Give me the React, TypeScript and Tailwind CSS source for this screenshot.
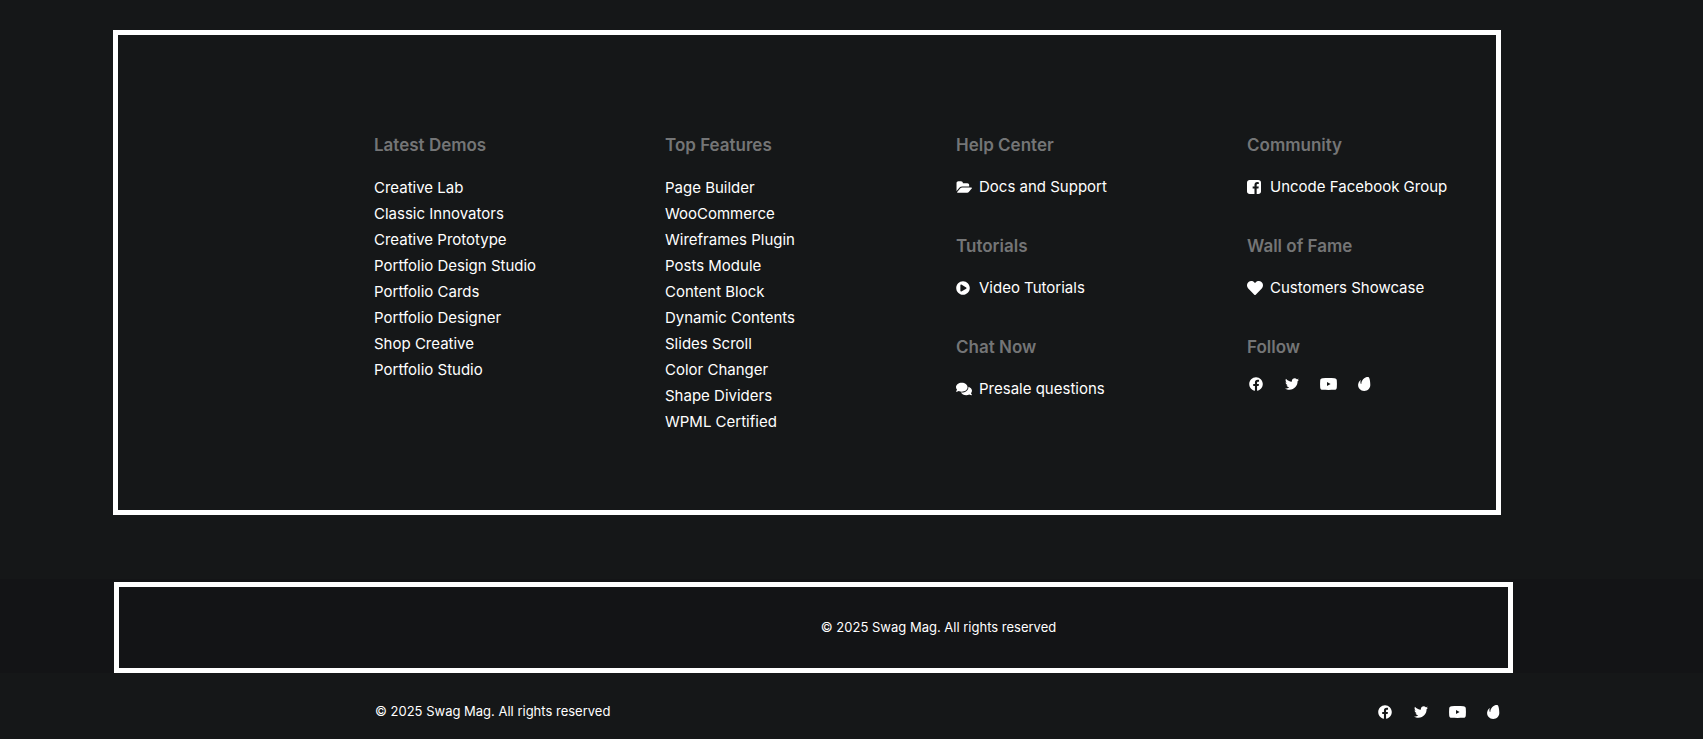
import React from 'react';
import { FaComments, FaFacebook, FaHeart, FaPlayCircle, FaTwitter } from 'react-icons/fa';

interface IconProps {
  className?: string;
}

interface IconBlock {
  title: string;
  label: string;
  icon: React.ComponentType<IconProps>;
  iconClass: string;
}

const FolderOpenIcon: React.FC<IconProps> = ({ className }) => (
  <svg className={className} viewBox="0 128 1943 1408" fill="currentColor">
    <path d="M1943 952q0 31-31 66l-336 396q-43 51-120.5 86.5t-143.5 35.5h-1088q-34 0-60.5-13t-26.5-43q0-31 31-66l336-396q43-51 120.5-86.5t143.5-35.5h1088q34 0 60.5 13t26.5 43zm-343-344v160h-832q-94 0-197 47.5t-164 119.5l-337 396-5 6q0-4-.5-12.5t-.5-12.5v-960q0-92 66-158t158-66h320q92 0 158 66t66 158v32h544q92 0 158 66t66 158z" />
  </svg>
);

const FacebookSquareIcon: React.FC<IconProps> = ({ className }) => (
  <svg className={className} viewBox="128 128 1536 1536" fill="currentColor">
    <path d="M1376 128q119 0 203.5 84.5t84.5 203.5v960q0 119-84.5 203.5t-203.5 84.5h-188v-595h199l30-232h-229v-148q0-56 23.5-84t91.5-28l122-1v-207q-63-9-178-9-136 0-217.5 80t-81.5 226v171h-200v232h200v595h-532q-119 0-203.5-84.5t-84.5-203.5v-960q0-119 84.5-203.5t203.5-84.5h960z" />
  </svg>
);

const YoutubeIcon: React.FC<IconProps> = ({ className }) => (
  <svg className={className} viewBox="0 0 17 12" fill="currentColor">
    <path fillRule="evenodd" d="M2.6.2C6 0 11 0 14.4.2 16 .3 16.7 1 16.8 2.6c.2 2.4.2 4.4 0 6.8-.1 1.6-.8 2.3-2.4 2.4-3.4.2-8.4.2-11.8 0C1 11.7.3 11 .2 9.4 0 7 0 5 .2 2.6.3 1 1 .3 2.6.2ZM7 3.9v4.2L10.6 6 7 3.9Z" />
  </svg>
);

const EnvatoIcon: React.FC<IconProps> = ({ className }) => (
  <svg className={className} viewBox="0 0 13 14" fill="currentColor">
    <path d="M10.7.3C9.9-.2 7 .3 5.1 2.2 3.2 4.2 3.3 7 3.3 7s-.1.3-.4-.1c-.8-1-.4-3.3-.3-3.6.1-.4-.2-.4-.2-.4S.1 5.200.1 8.100C.1 11.2 2.4 14 6.200 14c3.600 0 6.100-2.800 6.100-6C12.300 4.100 11.500.8 10.700.3Z" />
  </svg>
);

const demos: string[] = [
  'Creative Lab',
  'Classic Innovators',
  'Creative Prototype',
  'Portfolio Design Studio',
  'Portfolio Cards',
  'Portfolio Designer',
  'Shop Creative',
  'Portfolio Studio'
];

const features: string[] = [
  'Page Builder',
  'WooCommerce',
  'Wireframes Plugin',
  'Posts Module',
  'Content Block',
  'Dynamic Contents',
  'Slides Scroll',
  'Color Changer',
  'Shape Dividers',
  'WPML Certified'
];

const helpBlocks: IconBlock[] = [
  { title: 'Help Center', label: 'Docs and Support', icon: FolderOpenIcon, iconClass: 'h-3 w-4' },
  { title: 'Tutorials', label: 'Video Tutorials', icon: FaPlayCircle, iconClass: 'size-[14px]' },
  { title: 'Chat Now', label: 'Presale questions', icon: FaComments, iconClass: 'size-4' }
];

const communityBlocks: IconBlock[] = [
  { title: 'Community', label: 'Uncode Facebook Group', icon: FacebookSquareIcon, iconClass: 'size-[14px]' },
  { title: 'Wall of Fame', label: 'Customers Showcase', icon: FaHeart, iconClass: 'size-4' }
];

const Heading: React.FC<{ children: React.ReactNode }> = ({ children }) => (
  <h2 className="text-[17px] leading-6 font-semibold text-[#747576]">{children}</h2>
);

const LinkColumn: React.FC<{ title: string; links: string[] }> = ({ title, links }) => (
  <div>
    <Heading>{title}</Heading>
    <ul className="mt-[18px] text-[15px] leading-[26px]">
      {links.map((link) => (
        <li key={link}>
          <a href="#" className="hover:text-gray-400">{link}</a>
        </li>
      ))}
    </ul>
  </div>
);

const IconLink: React.FC<{ block: IconBlock }> = ({ block }) => (
  <div>
    <Heading>{block.title}</Heading>
    <a href="#" className="mt-[17px] flex items-center text-[15px] leading-[26px] hover:text-gray-400">
      <span className="w-[23px] shrink-0">
        <block.icon className={block.iconClass} />
      </span>
      {block.label}
    </a>
  </div>
);

const SocialLinks: React.FC = () => (
  <div className="flex items-center gap-5">
    <a href="#" aria-label="Facebook" className="flex w-4 justify-center">
      <FaFacebook className="size-[14px]" />
    </a>
    <a href="#" aria-label="Twitter" className="flex w-4 justify-center">
      <FaTwitter className="size-[14px]" />
    </a>
    <a href="#" aria-label="YouTube" className="flex w-4 justify-center">
      <YoutubeIcon className="h-3 w-[17px] shrink-0" />
    </a>
    <a href="#" aria-label="Envato" className="flex w-4 justify-center">
      <EnvatoIcon className="h-[14px] w-[13px]" />
    </a>
  </div>
);

const App: React.FC = () => {
  return (
    <footer className="min-h-screen bg-[#151718] font-['Inter',sans-serif] text-white">
      <div className="pt-[30px] pr-[202px] pb-16 pl-[113px]">
        <div className="grid grid-cols-4 gap-12 border-[5px] border-white pt-[98px] pr-[6px] pb-[75px] pl-64">
          <LinkColumn title="Latest Demos" links={demos} />
          <LinkColumn title="Top Features" links={features} />
          <div className="flex flex-col gap-[34px]">
            {helpBlocks.map((block) => (
              <IconLink key={block.title} block={block} />
            ))}
          </div>
          <div className="flex flex-col gap-[34px]">
            {communityBlocks.map((block) => (
              <IconLink key={block.title} block={block} />
            ))}
            <div>
              <Heading>Follow</Heading>
              <div className="mt-[18px] pl-px">
                <SocialLinks />
              </div>
            </div>
          </div>
        </div>
      </div>

      <div className="bg-[#131416] pt-[3px] pr-[190px] pl-[114px]">
        <div className="border-[5px] border-white py-[30px] pl-[250px] text-center text-[13px] leading-[21px]">
          <p>© 2025 Swag Mag. All rights reserved</p>
        </div>
      </div>

      <div className="flex items-center justify-between pt-7 pr-[202px] pb-7 pl-[375px] text-[13px] leading-[21px]">
        <p>© 2025 Swag Mag. All rights reserved</p>
        <SocialLinks />
      </div>
    </footer>
  );
};

export default App;
